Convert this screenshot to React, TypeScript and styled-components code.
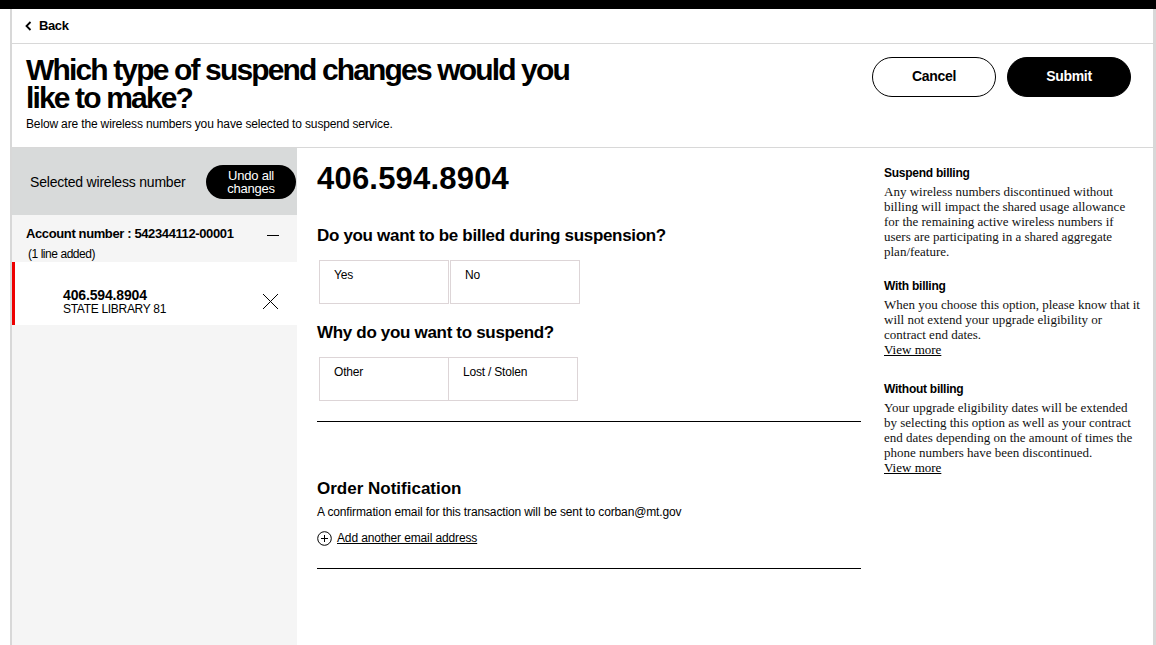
import React from "react";
import styled, { createGlobalStyle } from "styled-components";

const GlobalStyle = createGlobalStyle`
  html, body { margin: 0; padding: 0; background: #fff; }
  body {
    font-family: "Liberation Sans", Arial, Helvetica, sans-serif;
    color: #000;
    overflow: hidden;
  }
  * { box-sizing: border-box; }
`;

const TopBar = styled.div`
  height: 9px;
  background: #000;
`;

const Frame = styled.div`
  margin-left: 10px;
  border-left: 2px solid #d8d8d8;
  border-right: 3px solid #d8d8d8;
  height: calc(100vh - 9px);
  display: flex;
  flex-direction: column;
`;

const BackRow = styled.div`
  height: 35px;
  flex: none;
  display: flex;
  align-items: center;
  gap: 7px;
  padding: 0 0 1px 13px;
  border-bottom: 1px solid #d8d8d8;
  font-size: 13px;
  font-weight: 700;
  letter-spacing: -0.4px;
`;

const Header = styled.div`
  flex: none;
  height: 104px;
  display: flex;
  justify-content: space-between;
  align-items: flex-start;
  padding: 12px 22px 0 14px;
  border-bottom: 1px solid #d8d8d8;
`;

const TitleBlock = styled.div`
  display: flex;
  flex-direction: column;
`;

const Title = styled.h1`
  margin: 0;
  width: 570px;
  font-size: 30px;
  line-height: 28px;
  font-weight: 700;
  letter-spacing: -1.85px;
`;

const Subtitle = styled.p`
  margin: 4px 0 0;
  font-size: 12px;
  line-height: 16px;
  letter-spacing: -0.15px;
`;

const ButtonRow = styled.div`
  display: flex;
  gap: 11px;
  margin-top: 1px;
`;

const PillButton = styled.button<{ $primary?: boolean }>`
  width: 124px;
  height: 40px;
  border-radius: 20px;
  border: 1px solid #000;
  background: ${(p) => (p.$primary ? "#000" : "#fff")};
  color: ${(p) => (p.$primary ? "#fff" : "#000")};
  font-family: inherit;
  font-size: 14px;
  font-weight: 700;
  letter-spacing: -0.3px;
  padding: 0 0 2px;
  cursor: pointer;
`;

const Body = styled.div`
  flex: 1;
  display: flex;
  min-height: 0;
`;

const LeftPanel = styled.aside`
  width: 285px;
  flex: none;
  background: #f5f5f5;
  display: flex;
  flex-direction: column;
`;

const PanelHeader = styled.div`
  height: 67px;
  background: #d8dada;
  display: flex;
  align-items: center;
  justify-content: space-between;
  padding: 0 1px 0 18px;
  font-size: 14px;
  letter-spacing: -0.2px;
`;

const UndoButton = styled.button`
  width: 90px;
  height: 34px;
  border-radius: 17px;
  border: none;
  background: #000;
  color: #fff;
  font-family: inherit;
  font-size: 13px;
  line-height: 13px;
  letter-spacing: -0.2px;
  padding: 0 6px;
`;

const AccountRow = styled.div`
  padding: 11px 18px 0 14px;
`;

const AccountLine = styled.div`
  display: flex;
  justify-content: space-between;
  align-items: center;
  font-size: 13px;
  line-height: 16px;
  font-weight: 700;
  letter-spacing: -0.38px;
`;

const Minus = styled.span`
  width: 12px;
  height: 1px;
  background: #000;
  margin-top: 2px;
`;

const LinesAdded = styled.div`
  margin: 4px 0 0 2px;
  font-size: 12px;
  line-height: 16px;
  letter-spacing: -0.45px;
`;

const LineCard = styled.div`
  height: 63px;
  background: #fff;
  border-left: 3px solid #ee0000;
  display: flex;
  align-items: center;
  justify-content: space-between;
  padding: 16px 18px 0 48px;
`;

const LineInfo = styled.div`
  display: flex;
  flex-direction: column;
`;

const LineNumber = styled.span`
  font-size: 14px;
  line-height: 14px;
  font-weight: 700;
  letter-spacing: -0.15px;
`;

const LineLabel = styled.span`
  font-size: 12px;
  line-height: 14px;
  letter-spacing: -0.3px;
`;

const Main = styled.main`
  width: 564px;
  flex: none;
  padding: 13px 0 0 20px;
  display: flex;
  flex-direction: column;
`;

const BigNumber = styled.div`
  font-size: 31px;
  line-height: 36px;
  font-weight: 700;
  letter-spacing: 0.2px;
`;

const Question = styled.h2<{ $gap: number }>`
  margin: ${(p) => p.$gap}px 0 0;
  font-size: 17px;
  line-height: 20px;
  font-weight: 700;
  letter-spacing: -0.32px;
`;

const OptionGroup = styled.div<{ $joined?: boolean }>`
  margin: 14px 0 0 2px;
  display: flex;
  gap: ${(p) => (p.$joined ? "0" : "1px")};
`;

const Option = styled.div<{ $joined?: boolean }>`
  width: 130px;
  height: 44px;
  border: 1px solid #ddd5d7;
  margin-left: ${(p) => (p.$joined ? "-1px" : "0")};
  padding: 6px 0 0 14px;
  font-size: 12px;
  line-height: 16px;
  letter-spacing: -0.2px;
  &:first-child { margin-left: 0; }
`;

const Rule = styled.hr<{ $gap: number }>`
  margin: ${(p) => p.$gap}px 0 0;
  border: none;
  border-top: 1px solid #000;
  height: 0;
  width: 544px;
`;

const SectionTitle = styled.h3`
  margin: 57px 0 0;
  font-size: 17px;
  line-height: 20px;
  font-weight: 700;
  letter-spacing: 0;
`;

const BodyText = styled.p`
  margin: 5px 0 0;
  font-size: 12px;
  line-height: 16px;
  letter-spacing: -0.13px;
`;

const AddLink = styled.a`
  margin-top: 10px;
  display: flex;
  align-items: center;
  gap: 5px;
  font-size: 12px;
  line-height: 16px;
  letter-spacing: -0.13px;
  color: #000;
  text-decoration: underline;
  cursor: pointer;
`;

const InfoColumn = styled.aside`
  width: 258px;
  flex: none;
  margin-left: 23px;
  padding-top: 17px;
`;

const InfoSection = styled.section<{ $gap: number }>`
  margin-top: ${(p) => p.$gap}px;
`;

const InfoTitle = styled.h4`
  margin: 0;
  font-size: 12px;
  line-height: 16px;
  font-weight: 700;
  letter-spacing: -0.25px;
`;

const InfoText = styled.p`
  margin: 3px 0 0;
  font-family: "Liberation Serif", "Times New Roman", serif;
  font-size: 13px;
  line-height: 15px;
  color: #111;
`;

const ViewMore = styled.a`
  display: block;
  color: #000;
  text-decoration: underline;
  cursor: pointer;
`;

const ChevronLeft = () => (
  <svg width="7" height="10" viewBox="0 0 7 10" aria-hidden>
    <polyline points="5.5,1 1.5,5 5.5,9" fill="none" stroke="#000" strokeWidth="1.8" />
  </svg>
);

const CloseIcon = () => (
  <svg width="17" height="17" viewBox="0 0 17 17" aria-hidden>
    <path d="M1 1 L16 16 M16 1 L1 16" stroke="#000" strokeWidth="1" fill="none" />
  </svg>
);

const PlusCircle = () => (
  <svg width="15" height="15" viewBox="0 0 15 15" aria-hidden>
    <circle cx="7.5" cy="7.5" r="6.8" fill="none" stroke="#000" strokeWidth="1" />
    <path d="M7.5 4 V11 M4 7.5 H11" stroke="#000" strokeWidth="1" />
  </svg>
);

export default function App() {
  return (
    <>
      <GlobalStyle />
      <TopBar />
      <Frame>
        <BackRow>
          <ChevronLeft />
          <span>Back</span>
        </BackRow>
        <Header>
          <TitleBlock>
            <Title>Which type of suspend changes would you like to make?</Title>
            <Subtitle>Below are the wireless numbers you have selected to suspend service.</Subtitle>
          </TitleBlock>
          <ButtonRow>
            <PillButton>Cancel</PillButton>
            <PillButton $primary>Submit</PillButton>
          </ButtonRow>
        </Header>
        <Body>
          <LeftPanel>
            <PanelHeader>
              <span>Selected wireless number</span>
              <UndoButton>Undo all changes</UndoButton>
            </PanelHeader>
            <AccountRow>
              <AccountLine>
                <span>Account number : 542344112-00001</span>
                <Minus />
              </AccountLine>
              <LinesAdded>(1 line added)</LinesAdded>
            </AccountRow>
            <LineCard>
              <LineInfo>
                <LineNumber>406.594.8904</LineNumber>
                <LineLabel>STATE LIBRARY 81</LineLabel>
              </LineInfo>
              <CloseIcon />
            </LineCard>
          </LeftPanel>
          <Main>
            <BigNumber>406.594.8904</BigNumber>
            <Question $gap={29}>Do you want to be billed during suspension?</Question>
            <OptionGroup>
              <Option>Yes</Option>
              <Option>No</Option>
            </OptionGroup>
            <Question $gap={19}>Why do you want to suspend?</Question>
            <OptionGroup $joined>
              <Option $joined>Other</Option>
              <Option $joined>Lost / Stolen</Option>
            </OptionGroup>
            <Rule $gap={20} />
            <SectionTitle>Order Notification</SectionTitle>
            <BodyText>A confirmation email for this transaction will be sent to corban@mt.gov</BodyText>
            <AddLink>
              <PlusCircle />
              <span>Add another email address</span>
            </AddLink>
            <Rule $gap={22} />
          </Main>
          <InfoColumn>
            <InfoSection $gap={0}>
              <InfoTitle>Suspend billing</InfoTitle>
              <InfoText>
                Any wireless numbers discontinued without billing will impact the shared usage
                allowance for the remaining active wireless numbers if users are participating in
                a shared aggregate plan/feature.
              </InfoText>
            </InfoSection>
            <InfoSection $gap={19}>
              <InfoTitle>With billing</InfoTitle>
              <InfoText>
                When you choose this option, please know that it will not extend your upgrade
                eligibility or contract end dates.
                <ViewMore>View more</ViewMore>
              </InfoText>
            </InfoSection>
            <InfoSection $gap={24}>
              <InfoTitle>Without billing</InfoTitle>
              <InfoText>
                Your upgrade eligibility dates will be extended by selecting this option as well as
                your contract end dates depending on the amount of times the phone numbers have
                been discontinued.
                <ViewMore>View more</ViewMore>
              </InfoText>
            </InfoSection>
          </InfoColumn>
        </Body>
      </Frame>
    </>
  );
}
